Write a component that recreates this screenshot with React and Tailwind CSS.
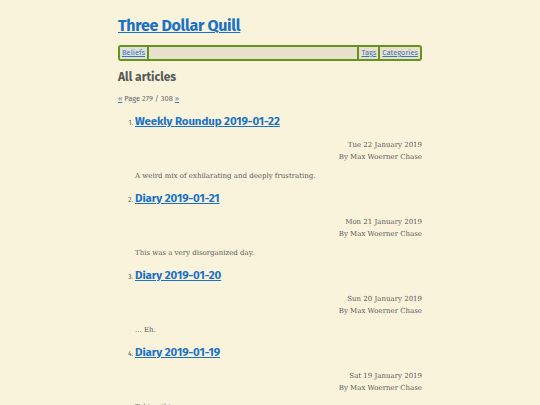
const articles = [
  { title: 'Weekly Roundup 2019-01-22', date: 'Tue 22 January 2019', summary: 'A weird mix of exhilarating and deeply frustrating.' },
  { title: 'Diary 2019-01-21', date: 'Mon 21 January 2019', summary: 'This was a very disorganized day.' },
  { title: 'Diary 2019-01-20', date: 'Sun 20 January 2019', summary: '... Eh.' },
  { title: 'Diary 2019-01-19', date: 'Sat 19 January 2019', summary: 'Taking things easy.' },
];

const sans = "font-['Fira_Sans','Open_Sans','Noto_Sans',sans-serif]";
const serif = "font-['Roboto_Slab','DejaVu_Serif','Liberation_Serif',serif]";

export default function App() {
  return (
    <div className="min-h-[405px] bg-[#faf3dc] overflow-hidden">
      <div className="w-[304px] mx-auto pt-[15px]">
        {/* Header */}
        <h1 className={`${sans} text-[16px] leading-[22px] font-bold text-[#1b72c2] underline tracking-[-0.3px]`}>
          Three Dollar Quill
        </h1>

        {/* Nav */}
        <nav className={`${sans} mt-[8px] h-[16px] flex items-stretch border-2 border-[#66921f] rounded-[3px] bg-[#e8e1cc] text-[7.5px] leading-[12px]`}>
          <a className="px-[2px] bg-[#dfe0dc] text-[#3a78b8] underline border-r-2 border-[#66921f]">Beliefs</a>
          <div className="flex-1" />
          <a className="px-[2px] text-[#3a78b8] underline border-l-2 border-[#66921f]">Tags</a>
          <a className="px-[2px] text-[#3a78b8] underline border-l-2 border-[#66921f]">Categories</a>
        </nav>

        <h2 className={`${sans} mt-[8px] text-[12px] leading-[16px] font-bold text-[#555a57]`}>All articles</h2>

        <p className={`${sans} mt-[9px] text-[7.5px] leading-[10px] text-[#666]`}>
          <a className="text-[#3a78b8] underline">«</a> Page 279 / 308 <a className="text-[#3a78b8] underline">»</a>
        </p>

        <ol className="mt-[8px] pl-[17px]">
          {articles.map((a, i) => (
            <li key={a.title} className="h-[77px]">
              <div className="flex items-baseline gap-[2px]">
                <span className={`${sans} w-[7px] -ml-[9px] text-right text-[6.5px] text-[#555]`}>{i + 1}.</span>
                <a className={`${sans} text-[11.5px] leading-[18px] font-bold text-[#1b72c2] underline tracking-[-0.1px]`}>{a.title}</a>
              </div>
              <div className={`${serif} mt-[9px] text-right text-[7px] leading-[12px] text-[#5a5a5a]`}>
                <div>{a.date}</div>
                <div>By Max Woerner Chase</div>
              </div>
              <p className={`${serif} mt-[7px] text-[7px] leading-[12px] text-[#5a5a5a]`}>{a.summary}</p>
            </li>
          ))}
        </ol>
      </div>
    </div>
  );
}
